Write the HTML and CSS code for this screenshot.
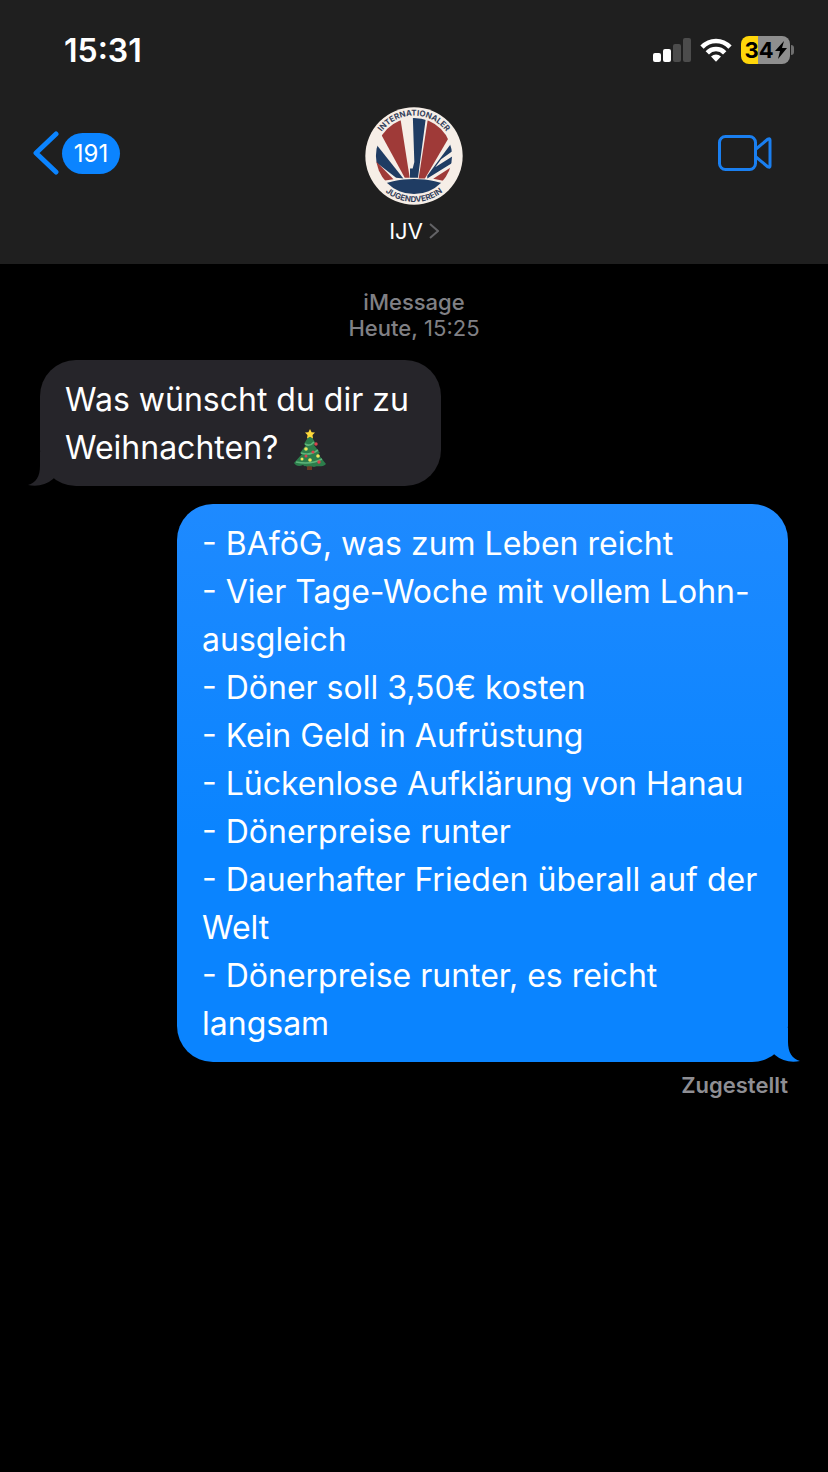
FILE: index.html
```html
<!DOCTYPE html>
<html lang="de">
<head>
  <meta charset="UTF-8" />
  <meta name="viewport" content="width=device-width, initial-scale=1" />
  <title>IJV</title>
  <link rel="stylesheet" href="styles.css">
</head>
<body>

  <header class="header">
    <div class="statusbar">
      <time class="clock">15:31</time>
      <div class="status-icons">
        <svg class="signal" viewBox="0 0 38 24" aria-hidden="true">
          <rect x="0" y="15" width="8" height="9" rx="2" fill="#fff"/>
          <rect x="10" y="11" width="8" height="13" rx="2" fill="#fff"/>
          <rect x="20" y="6" width="8" height="18" rx="2" fill="#4c4c4c"/>
          <rect x="30" y="0" width="8" height="24" rx="2" fill="#4c4c4c"/>
        </svg>
        <svg class="wifi" viewBox="0 0 32 24" aria-hidden="true">
          <g fill="none" stroke="#fff" stroke-width="4.6">
            <path d="M2 9.2C10 1 22 1 30 9.2"/>
            <path d="M7.3 14.8C12 9.8 20 9.8 24.7 14.8"/>
          </g>
          <path d="M11 18.5C14 15.8 18 15.8 21 18.5L16 23.7Z" fill="#fff"/>
        </svg>
        <div class="battery">
          <span class="battery-body">34<svg class="bolt" viewBox="0 0 12 18" aria-hidden="true"><path d="M9 0L0 10H5L3 18L12 7H7Z"/></svg></span>
          <span class="battery-cap"></span>
        </div>
      </div>
    </div>

    <nav class="nav">
      <button class="back" type="button" aria-label="Zurück, 191 ungelesen">
        <svg class="back-arrow" viewBox="0 0 26 44" aria-hidden="true">
          <path d="M23 3L3 22L23 41" fill="none" stroke="#0b84ff" stroke-width="5" stroke-linecap="round" stroke-linejoin="round"/>
        </svg>
        <span class="badge">191</span>
      </button>

      <button class="contact" type="button">
        <svg class="avatar" viewBox="28 24 296 296" role="img" aria-label="Internationaler Jugendverein">
          <defs>
            <clipPath id="inner"><circle cx="176" cy="172" r="115"/></clipPath>
            <path id="arcTop" d="M54 172A122 122 0 0 1 298 172"/>
            <path id="arcBottom" d="M37 172A139 139 0 0 0 315 172"/>
          </defs>
          <circle cx="176" cy="172" r="147" fill="#f6eee7"/>
          <g clip-path="url(#inner)">
            <path fill="#9f3a38" d="M72 98L132 40L163 238H148Z"/>
            <path fill="#1f3c63" d="M172 40H214L188 238H164V210H172L177 190Z"/>
            <path fill="#9f3a38" d="M221 40L285 110L209 240H190Z"/>
            <path fill="#1f3c63" d="M50 122L144 240L122 238L50 182Z"/>
            <path fill="#1f3c63" d="M300 118L216 232V240L300 188V168L240 206L258 182L300 152Z"/>
            <path fill="#9f3a38" d="M50 176L114 242L50 252Z"/>
            <path fill="#9f3a38" d="M300 198L234 241L300 254Z"/>
            <path fill="#1f3c63" d="M60 268C120 233 232 233 292 268V300H60Z"/>
          </g>
          <text class="logo-text"><textPath href="#arcTop" startOffset="50%" text-anchor="middle">INTERNATIONALER</textPath></text>
          <text class="logo-text"><textPath href="#arcBottom" startOffset="50%" text-anchor="middle">JUGENDVEREIN</textPath></text>
        </svg>
        <span class="contact-name">
          IJV
          <svg class="chevron" viewBox="0 0 10 16" aria-hidden="true">
            <path d="M1 1L9 8L1 15" fill="none" stroke="#636366" stroke-width="2"/>
          </svg>
        </span>
      </button>

      <button class="video" type="button" aria-label="FaceTime">
        <svg viewBox="0 0 54 36" aria-hidden="true">
          <g fill="none" stroke="#1a7ff0" stroke-width="3" stroke-linejoin="round">
            <rect x="1.5" y="1.5" width="36" height="33" rx="6"/>
            <path d="M38 14L50 4Q52 3 52 5V31Q52 33 50 32L38 22"/>
          </g>
        </svg>
      </button>
    </nav>
  </header>

  <main class="chat">
    <p class="stamp"><strong>iMessage</strong><br><strong>Heute,</strong> 15:25</p>

    <div class="bubble received">
      Was wünscht du dir zu<br>
      Weihnachten?
      <svg class="tree" viewBox="0 0 34 42" role="img" aria-label="Weihnachtsbaum">
        <path fill="#6b3a24" d="M14 35H19V41H14Z"/>
        <path fill="#2c7d4b" d="M17 5L23 15L21 16L27 24L25 25L33 35C29 39 24 36 21 38C17 36 13 39 10 36C6 38 3 37 1 34L9 25L7 24L13 16L11 15Z"/>
        <path fill="none" stroke="#5fb57b" stroke-width="1.6" d="M12 15Q17 18 21 13M8 24Q17 27 25 21M3 33Q18 36 29 30"/>
        <path fill="#ffd93b" d="M17 0L18.6 3.2L22 3.6L19.5 6L20 9.5L17 7.8L14 9.5L14.5 6L12 3.6L15.4 3.2Z"/>
        <g fill="#f2e85c">
          <circle cx="13" cy="20" r="1.8"/><circle cx="25" cy="27" r="1.8"/>
          <circle cx="9" cy="30" r="1.5"/><circle cx="17" cy="31" r="1.8"/>
        </g>
        <g fill="#d8434e">
          <circle cx="23" cy="15" r="1.7"/><circle cx="20" cy="23" r="1.6"/>
          <circle cx="26" cy="33" r="1.7"/><circle cx="13" cy="27" r="1.5"/>
        </g>
      </svg>
      <svg class="tail" viewBox="0 0 32 34" aria-hidden="true">
        <path d="M12 0V14C12 24 8 31 0 33C9 35 18 33 25 27L32 20V0Z"/>
      </svg>
    </div>

    <div class="bubble sent">
      - BAföG, was zum Leben reicht<br>
      - Vier Tage-Woche mit vollem Lohn-<br>
      ausgleich<br>
      - Döner soll 3,50€ kosten<br>
      - Kein Geld in Aufrüstung<br>
      - Lückenlose Aufklärung von Hanau<br>
      - Dönerpreise runter<br>
      - Dauerhafter Frieden überall auf der Welt<br>
      - Dönerpreise runter, es reicht langsam
      <svg class="tail" viewBox="0 0 32 34" aria-hidden="true">
        <path d="M12 0V14C12 24 8 31 0 33C9 35 18 33 25 27L32 20V0Z"/>
      </svg>
    </div>

    <p class="delivered">Zugestellt</p>
  </main>

</body>
</html>
```
FILE: styles.css
```css
*, *::before, *::after {
  box-sizing: border-box;
}

body {
  margin: 0;
  min-height: 100vh;
  background: #000;
  color: #fff;
  font-family: Inter, "Liberation Sans", sans-serif;
}

button {
  background: none;
  border: none;
  padding: 0;
  color: inherit;
  font: inherit;
  cursor: pointer;
}

svg { display: block; }

/* Kopfbereich */
.header { background: #1f1f1f; }

.statusbar {
  display: flex;
  align-items: center;
  justify-content: space-between;
  height: 100px;
  padding: 0 34px 0 64px;
}

.clock {
  font-size: 32px;
  font-weight: 600;
}

.status-icons {
  display: flex;
  align-items: center;
  gap: 9px;
}

.signal { width: 38px; height: 24px; }
.wifi { width: 32px; height: 24px; }

.battery {
  display: flex;
  align-items: center;
  gap: 1px;
}

.battery-body {
  display: flex;
  align-items: center;
  justify-content: center;
  gap: 1px;
  width: 49px;
  height: 28px;
  border-radius: 8px;
  background: linear-gradient(to right, #ffd60a 34%, #8e8e8e 34%);
  color: #000;
  font-size: 22px;
  font-weight: 700;
}

.bolt { width: 12px; height: 18px; }

.battery-cap {
  width: 3px;
  height: 10px;
  border-radius: 0 3px 3px 0;
  background: #6e6e6e;
}

.nav {
  display: grid;
  grid-template-columns: 1fr auto 1fr;
  align-items: start;
  padding: 7px 33px 19px;
}

.back {
  display: flex;
  align-items: center;
  gap: 3px;
  justify-self: start;
  height: 92px;
}

.back-arrow { width: 26px; height: 44px; }

.badge {
  width: 58px;
  height: 41px;
  border-radius: 21px;
  background: #0b84ff;
  font-size: 24px;
  line-height: 41px;
  text-align: center;
}

.contact {
  display: flex;
  flex-direction: column;
  align-items: center;
  gap: 12px;
}

.avatar { width: 98px; height: 98px; }

.logo-text {
  font-size: 24px;
  font-weight: 700;
  fill: #33405a;
}

.contact-name {
  display: flex;
  align-items: center;
  gap: 6px;
  font-size: 22px;
  line-height: 28px;
}

.chevron { width: 10px; height: 16px; }

.video {
  display: flex;
  align-items: center;
  justify-self: end;
  height: 92px;
  padding-right: 23px;
}

.video svg { width: 54px; height: 36px; }

/* Nachrichten */
.chat {
  display: flex;
  flex-direction: column;
  padding: 25px 40px;
}

.stamp {
  margin: 0 0 19px;
  color: #808085;
  font-size: 22px;
  line-height: 26px;
  text-align: center;
}

.stamp strong { font-weight: 500; }

.bubble {
  position: relative;
  max-width: calc(100% - 137px);
  margin-bottom: 18px;
  padding: 16px 25px 14px;
  border-radius: 36px;
  font-size: 32px;
  line-height: 48px;
}

.received {
  align-self: flex-start;
  padding-right: 32px;
  background: #26252a;
}

.sent {
  align-self: flex-end;
  margin-bottom: 10px;
  background: linear-gradient(#1e8aff, #0a84ff 60%);
}

/* Sprechblasen-Spitze */
.tail {
  position: absolute;
  bottom: 0;
  left: -12px;
  width: 32px;
  height: 34px;
  fill: #26252a;
}

.sent .tail {
  right: -12px;
  left: auto;
  transform: scaleX(-1);
  fill: #0a84ff;
}

.tree {
  display: inline-block;
  width: 34px;
  height: 42px;
  margin-left: 6px;
  vertical-align: middle;
}

.delivered {
  margin: 0;
  color: #8e8e93;
  font-size: 22px;
  font-weight: 600;
  line-height: 26px;
  text-align: right;
}
```
